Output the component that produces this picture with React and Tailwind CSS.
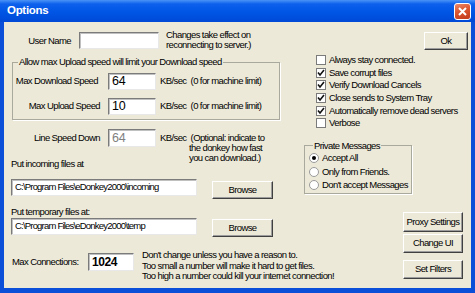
import React from "react";

const sunken =
  "bg-white border border-t-[#7b7b7b] border-l-[#7b7b7b] border-r-[#e8e8e8] border-b-[#e8e8e8] shadow-[inset_1px_1px_0_#c0c0c0]";
const raised =
  "bg-[#ECE9D8] border border-t-[#ffffff] border-l-[#ffffff] border-r-[#404040] border-b-[#404040] shadow-[inset_-1px_-1px_0_#9d9d9d]";

function Input({ value, className = "", text = "" }) {
  return (
    <div className={`${sunken} ${className} shrink-0 flex items-center px-[3px] ${text} whitespace-nowrap overflow-hidden`}>
      {value}
    </div>
  );
}

function Button({ children, className = "" }) {
  return (
    <div className={`${raised} ${className} shrink-0 flex items-center justify-center whitespace-nowrap`}>
      {children}
    </div>
  );
}

function Check({ checked, label }) {
  return (
    <div className="flex items-center h-[12.6px]">
      <div className="w-[10px] h-[10px] shrink-0 bg-white border border-[#7b7b7b] flex items-center justify-center">
        {checked && (
          <svg width="8" height="8" viewBox="0 0 8 8">
            <polyline points="1,3.5 3,6 7,1" fill="none" stroke="#111" strokeWidth="1.6" />
          </svg>
        )}
      </div>
      <span className="ml-[3px] whitespace-nowrap">{label}</span>
    </div>
  );
}

function Radio({ checked, label }) {
  return (
    <div className="flex items-center h-[13.5px]">
      <div className="w-[10px] h-[10px] shrink-0 rounded-full bg-white border border-[#9a9a9a] flex items-center justify-center">
        {checked && <div className="w-[4px] h-[4px] rounded-full bg-black" />}
      </div>
      <span className="ml-[3px] whitespace-nowrap">{label}</span>
    </div>
  );
}

export default function App() {
  return (
    <div className="w-[475px] h-[293px] flex flex-col bg-[#0B4FD8] overflow-hidden text-black text-[9.5px] tracking-[-0.6px] font-['Liberation_Sans',Arial,sans-serif]">
      {/* title bar */}
      <div className="h-[22px] shrink-0 flex items-center justify-between pl-[7px] pr-[4px] bg-[linear-gradient(180deg,#4a93f7_0%,#0d60ec_18%,#0055e5_55%,#0049d6_100%)]">
        <span className="text-white font-bold text-[11.5px] tracking-[-0.3px]">Options</span>
        <div className="w-[17px] h-[17px] rounded-[3px] border border-white bg-[linear-gradient(160deg,#ec8a6a_0%,#dc5630_45%,#c23a1a_100%)] flex items-center justify-center">
          <svg width="9" height="9" viewBox="0 0 9 9">
            <path d="M1 1 L8 8 M8 1 L1 8" stroke="#fff" strokeWidth="2" />
          </svg>
        </div>
      </div>

      {/* body */}
      <div className="flex-1 min-h-0 mx-[4px] mb-[5px] bg-[#ECE9D8] flex">
        {/* left column */}
        <div className="w-[296px] shrink-0 flex flex-col">
          <div className="flex items-start mt-[10px] h-[17px]">
            <div className="w-[75px] shrink-0 pr-[8px] text-right leading-[17px]">User Name</div>
            <Input value="" className="w-[80px] h-[17px]" />
            <div className="ml-[7px] -mt-[2px] leading-[10px] whitespace-nowrap">
              Changes take effect on
              <br />
              reconnecting to server.)
            </div>
          </div>

          <fieldset className="ml-[8px] mt-[7px] w-[268px] border border-[#a9a99d] shadow-[1px_1px_0_#fff] pb-[4px]">
            <legend className="ml-[5px] px-[1px] leading-[12px] whitespace-nowrap">
              Allow max Upload speed will limit your Download speed
            </legend>
            <div className="flex items-center mt-[5px]">
              <div className="w-[95px] shrink-0 pr-[10px] text-right whitespace-nowrap">Max Download Speed</div>
              <Input value="64" className="w-[48px] h-[17px]" text="text-[12.5px] tracking-[-0.3px]" />
              <div className="ml-[4px] whitespace-nowrap">KB/sec&nbsp;&nbsp;(0 for machine limit)</div>
            </div>
            <div className="flex items-center mt-[8px]">
              <div className="w-[95px] shrink-0 pr-[8px] text-right whitespace-nowrap">Max Upload Speed</div>
              <Input value="10" className="w-[48px] h-[17px]" text="text-[12.5px] tracking-[-0.3px]" />
              <div className="ml-[4px] whitespace-nowrap">KB/sec&nbsp;&nbsp;(0 for machine limit)</div>
            </div>
          </fieldset>

          <div className="flex items-start mt-[9px] h-[18px]">
            <div className="w-[104px] shrink-0 pr-[8px] text-right leading-[17px] whitespace-nowrap">Line Speed Down</div>
            <Input value="64" className="w-[48px] h-[18px] text-[#808080]" text="text-[12.5px] tracking-[-0.3px]" />
            <div className="ml-[4px] mt-[4px] leading-[10px] whitespace-nowrap">
              KB/sec&nbsp;&nbsp;(Optional: indicate to
              <br />
              <span className="ml-[29px]">the donkey how fast</span>
              <br />
              <span className="ml-[29px]">you can download.)</span>
            </div>
          </div>

          <div className="ml-[7px] mt-[11px] leading-[12px]">Put incoming files at</div>
          <div className="flex items-start mt-[9px]">
            <Input value="C:\Program Files\eDonkey2000\incoming" className="ml-[7px] w-[186px] h-[17px]" text="tracking-[-0.8px]" />
            <Button className="ml-[15px] mt-[2px] w-[61px] h-[18px]">Browse</Button>
          </div>

          <div className="ml-[7px] mt-[7px] leading-[12px]">Put temporary files at:</div>
          <div className="flex items-start">
            <Input value="C:\Program Files\eDonkey2000\temp" className="ml-[7px] w-[186px] h-[17px]" text="tracking-[-0.8px]" />
            <Button className="ml-[15px] mt-[1px] w-[61px] h-[18px]">Browse</Button>
          </div>

          <div className="flex items-start mt-[16px] h-[18px]">
            <div className="ml-[8px] w-[76px] shrink-0 leading-[18px] whitespace-nowrap">Max Connections:</div>
            <Input value="1024" className="w-[46px] h-[18px] font-bold" text="text-[12px] tracking-[-0.4px]" />
            <div className="ml-[8px] -mt-[3px] leading-[10.5px] whitespace-nowrap">
              Don't change unless you have a reason to.
              <br />
              Too small a number will make it hard to get files.
              <br />
              Too high a number could kill your internet connection!
            </div>
          </div>
        </div>

        {/* right column */}
        <div className="flex-1 min-w-0 flex flex-col">
          <div className="flex justify-end mt-[10px] mr-[3px]">
            <Button className="w-[44px] h-[18px]">Ok</Button>
          </div>
          <div className="ml-[16px] mt-[4px] flex flex-col">
            <Check checked={false} label="Always stay connected." />
            <Check checked label="Save corrupt files" />
            <Check checked label="Verify Download Cancels" />
            <Check checked label="Close sends to System Tray" />
            <Check checked label="Automatically remove dead servers" />
            <Check checked={false} label="Verbose" />
          </div>

          <fieldset className="ml-[4px] mt-[10px] w-[108px] border border-[#a9a99d] shadow-[1px_1px_0_#fff] pl-[4px] pb-[1px]">
            <legend className="ml-[4px] px-[1px] leading-[12px] whitespace-nowrap">Private Messages</legend>
            <div className="flex flex-col">
              <Radio checked label="Accept All" />
              <Radio checked={false} label="Only from Friends." />
              <Radio checked={false} label="Don't accept Messages" />
            </div>
          </fieldset>

          <div className="ml-[103px] mt-[18px] flex flex-col">
            <Button className="w-[60px] h-[20px]">Proxy Settings</Button>
            <Button className="w-[60px] h-[19px] mt-[2px]">Change UI</Button>
            <Button className="w-[60px] h-[19px] mt-[7px]">Set Filters</Button>
          </div>
        </div>
      </div>
    </div>
  );
}
